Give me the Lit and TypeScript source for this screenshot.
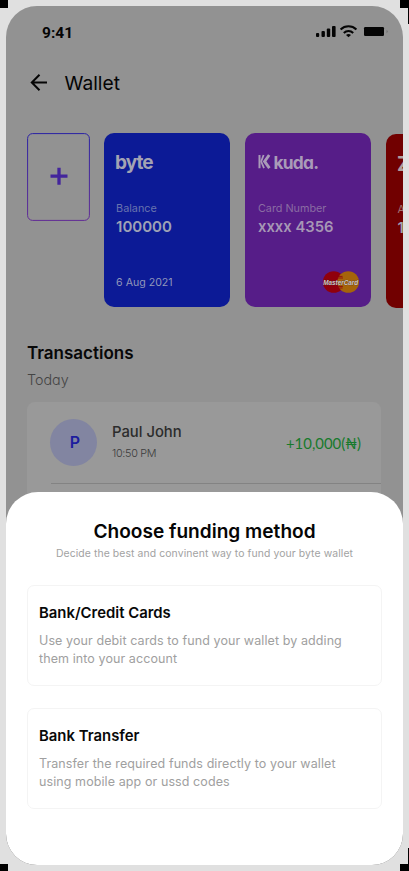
import { LitElement, html, css, svg } from "lit";
import { customElement, property } from "lit/decorators.js";

@customElement("status-bar")
class StatusBar extends LitElement {
  static styles = css`
    :host { display: flex; justify-content: space-between; padding: 17px 15px 0 36px; height: 20px; }
    .time { font: 700 15.5px/19px Roboto, sans-serif; color: #050505; padding-top: 1px; }
    svg { display: block; }
  `;
  render() {
    return html`<span class="time">9:41</span>
      <svg width="73" height="18" viewBox="315 23 73 18" fill="#050505">
        <rect x="316" y="33" width="3.2" height="4" rx="1" />
        <rect x="321.5" y="31" width="3.4" height="6" rx="1" />
        <rect x="326.8" y="28.6" width="3.4" height="8.4" rx="1" />
        <rect x="332" y="26" width="3.6" height="11" rx="1" />
        <g fill="none" stroke="#050505" stroke-width="2.1">
          <path d="M340.6 29.4a11.4 11.4 0 0 1 15.8 0" />
          <path d="M343.8 32.9a6.8 6.8 0 0 1 9.4 0" />
        </g>
        <path d="M346 35a3.8 3.8 0 0 1 5 0l-2.5 2.2z" />
        <rect x="364" y="27" width="20" height="9" rx="1.2" />
        <path d="M386.8 29.8q1.2 1.7 0 3.6z" fill="#444" />
      </svg>`;
  }
}

const bankLogos: Record<string, unknown> = {
  byte: svg`<svg class="logo" width="62" height="22" viewBox="0 0 62 22"><text class="byte" x="-1" y="15.5" textLength="38.5" lengthAdjust="spacing">byte</text></svg>`,
  kuda: svg`<svg class="logo" width="62" height="22" viewBox="0 0 62 22">
      <g fill="none" stroke="#a99bb8">
        <path d="M1.5 2V15.2" stroke-width="2" />
        <path d="M5.6 2L3.2 8.5L6 15.2" stroke-width="1.8" />
        <path d="M11.2 2L6.6 8.4L11.4 15.2" stroke-width="2.9" />
      </g>
      <text class="kuda" x="15.5" y="15.5" textLength="45.5" lengthAdjust="spacing">kuda.</text></svg>`,
  zenith: svg`<svg class="logo" width="30" height="22" viewBox="0 0 30 22"><text class="zenith" x="0" y="16.5">Z</text></svg>`,
};

@customElement("bank-card")
class BankCard extends LitElement {
  @property() brand = "byte";
  @property() label = "";
  @property() value = "";
  @property() date = "";
  static styles = css`
    :host { display: flex; flex-direction: column; flex: none; box-sizing: border-box; width: 126px; height: 173.5px;
      border-radius: 10px; padding: 20px 11.8px 0; font-family: Inter, sans-serif; }
    :host([brand="byte"]) { background: #0c1a96; }
    :host([brand="kuda"]) { background: #561d88; padding-left: 13px; }
    :host([brand="zenith"]) { background: #710000; margin-top: 1px; }
    .logo { display: block; flex: none; overflow: visible; }
    text { fill: #a3a3b3; }
    .byte { font: 700 19px Inter, sans-serif; }
    .kuda { font: 700 17.4px Inter, sans-serif; font-feature-settings: "cv11" 1; fill: #a99bb8; }
    .zenith { font: 700 20px Inter, sans-serif; fill: #b0a0a0; }
    .label { font-size: 10.8px; line-height: 14px; margin-top: 27px; color: #6974ae; white-space: nowrap; }
    :host([brand="kuda"]) .label { color: #8a6ca3; }
    :host([brand="zenith"]) .label { color: #a07070; }
    .value { font-size: 15px; line-height: 20px; margin-top: 1px; font-weight: 600; color: #9ea2b5; white-space: nowrap; }
    :host([brand="kuda"]) .value { color: #a697b5; font-size: 14.8px; }
    .date { font-size: 10.6px; line-height: 14px; margin-top: 38.5px; color: #9298ba; white-space: nowrap; }
    .mc { display: block; margin: 34px 0 0 64.5px; overflow: visible; flex: none; }
    .mc text { font: italic 700 8px "Liberation Sans", sans-serif; fill: #ccc8c8; stroke: #33202a; stroke-width: .35px; paint-order: stroke; }
  `;
  render() {
    return html`${bankLogos[this.brand]}
      <div class="label">${this.label}</div>
      <div class="value">${this.value}</div>
      ${this.date ? html`<div class="date">${this.date}</div>` : null}
      ${this.brand === "kuda"
        ? html`<svg class="mc" width="37" height="22" viewBox="0 0 37 22">
            <circle cx="11.7" cy="11" r="10.8" fill="#90000c" />
            <circle cx="26.2" cy="11" r="10.8" fill="#a5640a" />
            <path d="M16 7h5M15.5 5.4h5M15.8 15.5h5M16.6 17h4" stroke="#90000c" stroke-width=".8" />
            <text x="1.2" y="13.9" textLength="35" lengthAdjust="spacingAndGlyphs">MasterCard</text>
          </svg>`
        : null}`;
  }
}

@customElement("funding-option")
class FundingOption extends LitElement {
  @property() heading = "";
  @property({ type: Array }) lines: string[] = [];
  static styles = css`
    :host { display: block; box-sizing: border-box; height: 101px; border: 1px solid #f4f4f4; border-radius: 7px; padding: 17px 11px 0; }
    h3 { margin: 0 0 9px; font: 600 14.9px/20px Inter, sans-serif; color: #080808; }
    p { margin: 0; font: 400 12.5px/18px Inter, sans-serif; letter-spacing: .09px; color: #a0a0a0; white-space: nowrap; }
  `;
  render() {
    return html`<h3>${this.heading}</h3>${this.lines.map((l) => html`<p>${l}</p>`)}`;
  }
}

@customElement("app-root")
class AppRoot extends LitElement {
  static styles = css`
    :host { display: grid; position: relative; box-sizing: border-box; width: 409px; height: 871px; padding: 6px; background: #e0e0e0; overflow: hidden; font-family: Inter, sans-serif; }
    .corner { position: absolute; width: 9px; height: 8px; background: #000; }
    .corner::after { content: ""; position: absolute; right: 0; width: 1px; height: 16px; background: #000; }
    .tl { left: 0; top: 0; width: 8px; }
    .bl { left: 0; bottom: 0; width: 8px; height: 7px; }
    .tr { right: 0; top: 0; }
    .br { right: 0; bottom: 0; height: 7px; }
    .tl::after, .bl::after { display: none; }
    .tr::after { top: 8px; }
    .br::after { bottom: 7px; }
    .phone { position: relative; width: 397px; height: 859px; border-radius: 31px; overflow: hidden; background: #929292; }
    .title { display: flex; align-items: center; height: 28px; margin: 26px 0 0 24px; gap: 15.5px; }
    .title h1 { margin: 0; font: 400 19.2px/28px Inter, sans-serif; color: #050505; }
    .cards { display: flex; gap: 14.7px; margin: 36px 0 0 21px; height: 175px; overflow: hidden; }
    .add { flex: none; width: 63px; height: 88px; display: block; margin-right: -.4px; }
    h2 { margin: 33px 0 0 21px; font: 600 17px/24px Inter, sans-serif; color: #080808; }
    .today { margin: 5px 0 0 21px; font: 300 14.3px/20px Inter, sans-serif; font-feature-settings: "cv11" 1; color: #444; }
    .list { box-sizing: border-box; margin: 12px 22px 0 21px; height: 130px; border-radius: 8px; background: #999; padding-left: 24px; }
    .row { display: flex; align-items: center; border-bottom: 1px solid #838383; box-sizing: border-box; height: 82px; padding-right: 20px; }
    .avatar { width: 47px; height: 47px; border-radius: 50%; background: #8285a1; color: #1c1c9e; font: 600 16px/46px Inter, sans-serif; text-align: center; margin-left: -1px; box-sizing: border-box; padding-left: 3px; }
    .who { margin: -2px 0 0 15px; flex: 1; }
    .name { font: 500 14.8px/20px Inter, sans-serif; color: #2c2c2c; }
    .when { font: 300 10.8px/14px Inter, sans-serif; color: #3c3c3c; margin-top: 5px; letter-spacing: -.3px; }
    .amount { font: 400 14.9px/20px Lato, sans-serif; color: #177a2c; white-space: nowrap; margin-top: 1px; }
    .sheet { position: absolute; left: 0; right: 0; bottom: 0; height: 373.5px; box-sizing: border-box; padding: 25px 21px 0; background: #fff; border-radius: 32px 32px 31px 31px; }
    .sheet h2 { margin: 0; font: 600 19.1px/28px Inter, sans-serif; text-align: center; color: #050505; }
    .sub { margin: 2px 0 0; font: 400 10.4px/14px Inter, sans-serif; letter-spacing: .1px; text-align: center; color: #a2a2a2; }
    .options { display: grid; gap: 22px; margin-top: 24px; }
  `;
  render() {
    return html`<i class="corner tl"></i><i class="corner tr"></i><i class="corner bl"></i><i class="corner br"></i>
      <main class="phone">
        <status-bar></status-bar>
        <div class="title">
          <svg width="19" height="20" viewBox="0 0 19 20" fill="none" stroke="#050505" stroke-width="2">
            <path d="M17 9.5H2M9.5 1.8L1.8 9.5L9.5 17.2" />
          </svg>
          <h1>Wallet</h1>
        </div>
        <div class="cards">
          <svg class="add" viewBox="0 0 63 88">
            <defs><linearGradient id="edge" x1="0" y1="0" x2="0" y2="1"><stop stop-color="#2920a4" /><stop offset="1" stop-color="#602a95" /></linearGradient></defs>
            <rect x=".6" y=".6" width="61.8" height="86.8" rx="5" fill="none" stroke="url(#edge)" />
            <path d="M23.5 43.2h17M32 34.7v17" fill="none" stroke="#43259c" stroke-width="3.3" />
          </svg>
          <bank-card brand="byte" label="Balance" value="100000" date="6 Aug 2021"></bank-card>
          <bank-card brand="kuda" label="Card Number" value="xxxx 4356"></bank-card>
          <bank-card brand="zenith" label="Account" value="100000"></bank-card>
        </div>
        <h2>Transactions</h2>
        <div class="today">Today</div>
        <div class="list">
          <div class="row">
            <div class="avatar">P</div>
            <div class="who"><div class="name">Paul John</div><div class="when">10:50 PM</div></div>
            <div class="amount">+10,000(₦)</div>
          </div>
        </div>
        <section class="sheet">
          <h2>Choose funding method</h2>
          <p class="sub">Decide the best and convinent way to fund your byte wallet</p>
          <div class="options">
            <funding-option heading="Bank/Credit Cards" .lines=${["Use your debit cards to fund your wallet by adding", "them into your account"]}></funding-option>
            <funding-option heading="Bank Transfer" .lines=${["Transfer the required funds directly to your wallet", "using mobile app or ussd codes"]}></funding-option>
          </div>
        </section>
      </main>`;
  }
}
